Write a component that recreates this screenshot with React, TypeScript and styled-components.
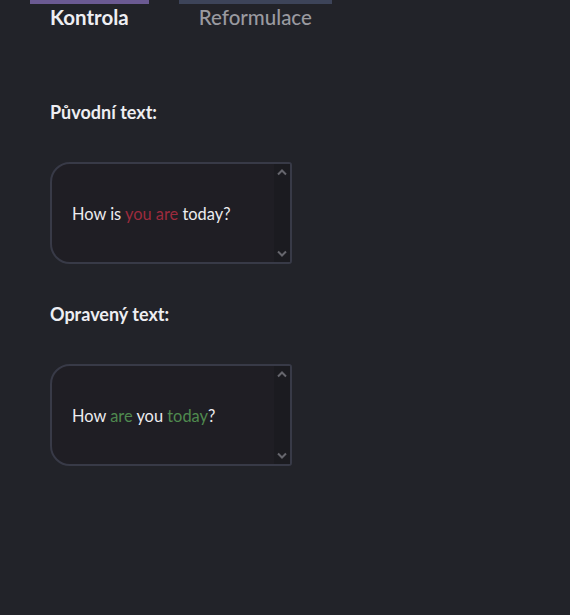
import React from "react";
import styled, { createGlobalStyle } from "styled-components";

const Global = createGlobalStyle`
  html, body { margin: 0; padding: 0; background: #222329; }
  body { font-family: "Lato", "Open Sans", "Noto Sans", sans-serif; color: #ececef; }
`;

const Page = styled.div`
  min-height: 615px;
  background: #222329;
`;

const Tabs = styled.div`
  display: flex;
  gap: 30px;
  padding-left: 30px;
`;

const Tab = styled.div<{ $active?: boolean }>`
  border-top: 4px solid ${(p) => (p.$active ? "#6b5a92" : "#3d4459")};
  padding: 0 20px;
  font-size: 20.5px;
  line-height: 27px;
  font-weight: ${(p) => (p.$active ? 700 : 500)};
  color: ${(p) => (p.$active ? "#eeeef2" : "#9a9aa0")};
`;

const Content = styled.div`
  padding: 69px 50px 0;
  display: flex;
  flex-direction: column;
`;

const Label = styled.div`
  font-size: 18px;
  line-height: 24px;
  font-weight: 700;
  color: #eeeef2;
  margin-bottom: 38px;
`;

const Box = styled.div`
  width: 242px;
  height: 102px;
  box-sizing: border-box;
  border: 2px solid #383a47;
  border-radius: 20px 3px 3px 20px;
  background: #1f1e24;
  display: flex;
  margin-bottom: 38px;
`;

const BoxText = styled.div`
  flex: 1;
  display: flex;
  align-items: center;
  padding-left: 20px;
  font-size: 16.4px;
  color: #ececef;
`;

const Scroll = styled.div`
  width: 16px;
  background: #1b1b20;
  display: flex;
  flex-direction: column;
  justify-content: space-between;
  align-items: center;
  padding: 5px 0;
`;

const Word = styled.span<{ $tone: "bad" | "good" }>`
  color: ${(p) => (p.$tone === "bad" ? "#9c2b3d" : "#4f8a4f")};
`;

const Chevron = ({ up }: { up?: boolean }) => (
  <svg width="10" height="7" viewBox="0 0 10 7">
    <path
      d={up ? "M1 5.5 L5 1.5 L9 5.5" : "M1 1.5 L5 5.5 L9 1.5"}
      fill="none"
      stroke="#66666d"
      strokeWidth="2"
    />
  </svg>
);

const TextBox = ({ children }: { children: React.ReactNode }) => (
  <Box>
    <BoxText>{children}</BoxText>
    <Scroll>
      <Chevron up />
      <Chevron />
    </Scroll>
  </Box>
);

export default function App() {
  return (
    <Page>
      <Global />
      <Tabs>
        <Tab $active>Kontrola</Tab>
        <Tab>Reformulace</Tab>
      </Tabs>
      <Content>
        <Label>Původní text:</Label>
        <TextBox>
          <span>
            How is <Word $tone="bad">you are</Word> today?
          </span>
        </TextBox>
        <Label>Opravený text:</Label>
        <TextBox>
          <span>
            How <Word $tone="good">are</Word> you <Word $tone="good">today</Word>?
          </span>
        </TextBox>
      </Content>
    </Page>
  );
}
